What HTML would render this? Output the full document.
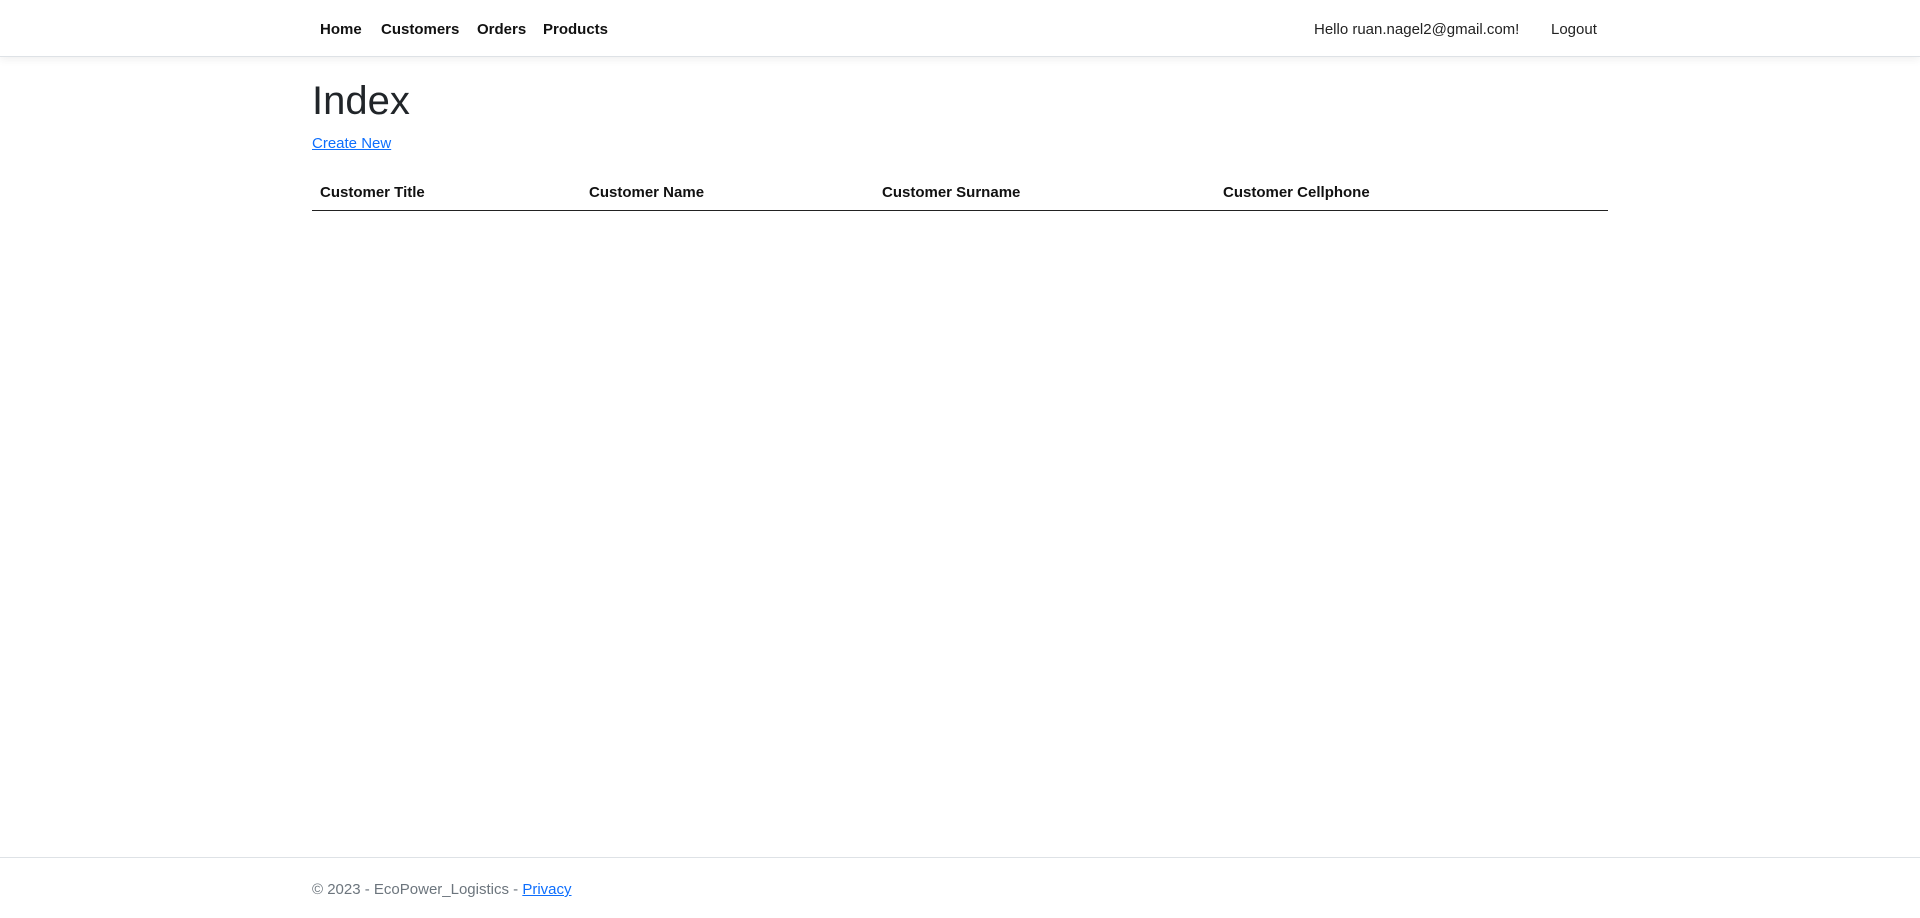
<!DOCTYPE html>
<html><head><meta charset="utf-8"><style>
*{box-sizing:border-box;margin:0;padding:0}
body{width:1920px;height:918px;font-family:"Liberation Sans",sans-serif;font-size:15px;color:#212529;background:#fff;position:relative;overflow:hidden}
.nav{position:absolute;left:0;top:0;width:1920px;height:57px;border-bottom:1px solid #dee2e6;box-shadow:0 3px 8px rgba(0,0,0,.06)}
.nav a{position:absolute;top:21px;color:#111;font-weight:bold;text-decoration:none;font-size:15px}
.r{position:absolute;top:21px;font-size:15px;color:#222}
h1{position:absolute;left:312px;top:79px;font-size:40px;font-weight:500}
.cn{position:absolute;left:312px;top:135px;color:#0d6efd;font-size:15px;text-decoration:underline}
.th{position:absolute;top:184px;font-weight:bold;font-size:15px;color:#111}
.line{position:absolute;left:312px;top:210px;width:1296px;height:1px;background:#222}
.foot{position:absolute;left:0;top:857px;width:1920px;border-top:1px solid #dee2e6}
.ft{position:absolute;left:312px;top:881px;color:#6c757d;font-size:15px}
.ft a{color:#0d6efd;text-decoration:underline}
</style></head><body>
<div class="nav">
<a style="left:320px">Home</a><a style="left:381px">Customers</a><a style="left:477px">Orders</a><a style="left:543px">Products</a>
<span class="r" style="left:1314px">Hello ruan.nagel2@gmail.com!</span>
<span class="r" style="left:1551px">Logout</span>
</div>
<h1>Index</h1>
<a class="cn">Create New</a>
<span class="th" style="left:320px">Customer Title</span>
<span class="th" style="left:589px">Customer Name</span>
<span class="th" style="left:882px">Customer Surname</span>
<span class="th" style="left:1223px">Customer Cellphone</span>
<div class="line"></div>
<div class="foot"></div>
<div class="ft">© 2023 - EcoPower_Logistics - <a>Privacy</a></div>
</body></html>
